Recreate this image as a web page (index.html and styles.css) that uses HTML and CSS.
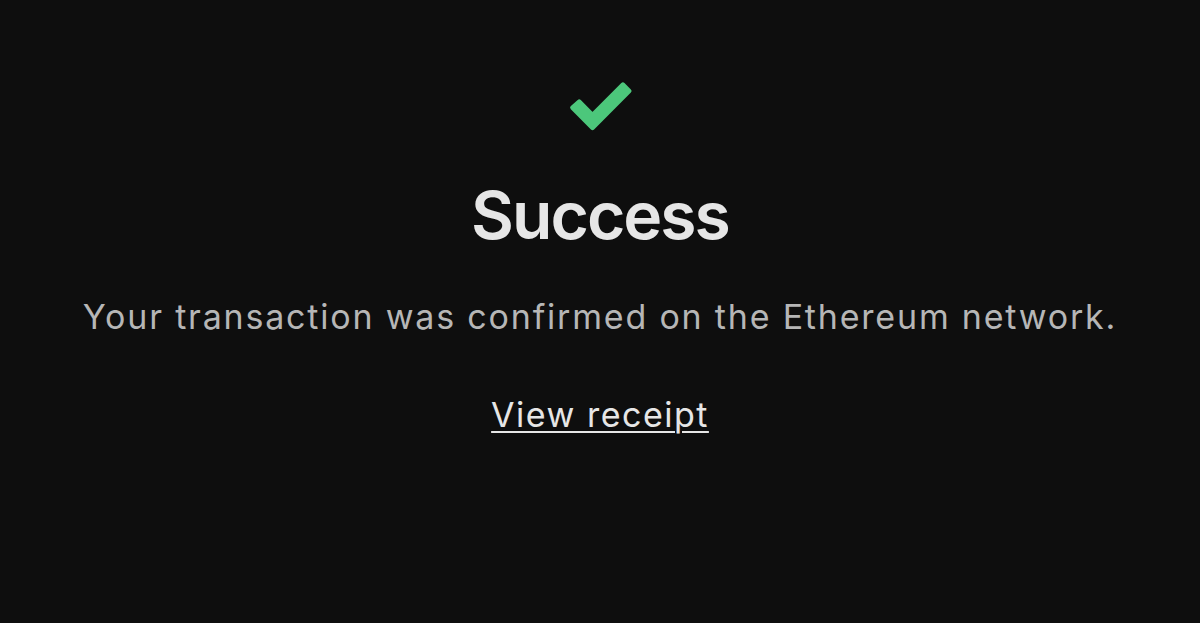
FILE: index.html
```html
<!DOCTYPE html>
<html lang="en">
<head>
	<meta charset="UTF-8">
	<meta name="viewport" content="width=device-width, initial-scale=1.0">
	<title>Success</title>
	<link rel="stylesheet" href="styles.css">
</head>
<body>
	<main class="result">
		<svg class="result-icon" width="72" height="58" viewBox="0 0 72 58" aria-hidden="true">
			<path d="M15.2 23.6 L28.5 37 L58.9 6.6 L65.3 13 L28.5 49.8 L8.4 29.7 Z" fill="#4cc77b" stroke="#4cc77b" stroke-width="4.5" stroke-linejoin="round"/>
		</svg>
		<h1 class="result-title">Success</h1>
		<p class="result-text">Your transaction was confirmed on the Ethereum network.</p>
		<a class="result-link" href="#">View receipt</a>
	</main>
</body>
</html>
```

FILE: styles.css
```css
* {
	box-sizing: border-box;
}

body {
	margin: 0;
	padding: 0;
	font-family: Inter, "Liberation Sans", sans-serif;
	background-color: #0e0e0e;
	color: #e8e8e8;
}

.result {
	display: flex;
	flex-direction: column;
	align-items: center;
	padding-top: 78px;
	text-align: center;
}

.result-icon {
	display: block;
}

.result-title {
	margin: 46px 0 0;
	font-size: 66px;
	font-weight: 600;
	line-height: 1;
	letter-spacing: -2px;
	color: #e6e6e6;
}

.result-text {
	margin: 49px 0 0;
	font-size: 34px;
	line-height: 1.2;
	letter-spacing: 1.8px;
	color: #b6b6b6;
}

.result-link {
	margin-top: 57px;
	font-size: 34px;
	line-height: 1.2;
	letter-spacing: 1.5px;
	color: #e6e6e6;
	text-decoration: underline;
	text-underline-offset: 4px;
	text-decoration-thickness: 2px;
}
```
